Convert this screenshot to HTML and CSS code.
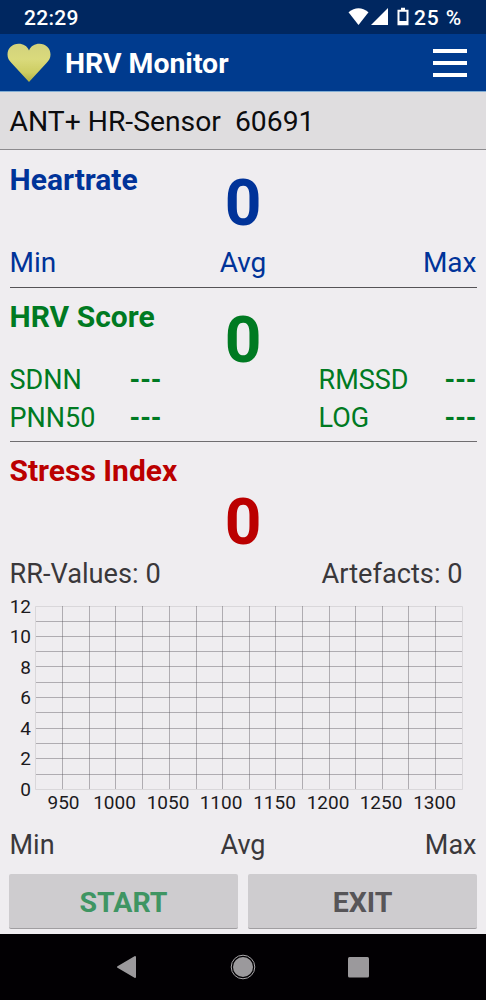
FILE: index.html
```html
<!DOCTYPE html>
<html lang="en">
  <head>
    <meta charset="UTF-8" />
    <meta name="viewport" content="width=device-width, initial-scale=1.0" />
    <title>HRV Monitor</title>
    <link rel="stylesheet" href="styles.css">
  </head>
  <body>
    <div class="status-bar">
      <span class="clock">22:29</span>
      <svg class="status-icons" width="62" height="22" viewBox="0 0 62 22">
        <path d="M0.5 6.2 Q10.5 -1.8 20.5 6.2 L10.5 19 Z" fill="#fff" />
        <path d="M40 2 V19 H23 Z" fill="#fff" />
        <path d="M53 1.8 h4 v2 h3.5 v15.4 h-11 v-15.4 h3.5 Z M51.5 5.8 v9.2 h7 v-9.2 Z" fill="#fff" fill-rule="evenodd" />
      </svg>
      <span class="battery">25 %</span>
    </div>

    <header>
      <svg class="heart" width="44" height="40" viewBox="0 0 44 40">
        <defs>
          <linearGradient id="gold" x1="0" y1="0" x2="0" y2="1">
            <stop offset="0" stop-color="#d2d27c" />
            <stop offset="0.4" stop-color="#dada7c" />
            <stop offset="0.75" stop-color="#cdcd62" />
            <stop offset="1" stop-color="#b0b045" />
          </linearGradient>
        </defs>
        <path d="M22 39 L4.500 20 C2 17.500 0.500 15 0.500 11.500 C0.500 5 5.500 0.800 11.500 0.800 C16.500 0.800 20 3 22 7.500 C24 3 27.500 0.800 32.500 0.800 C38.500 0.800 43.500 5 43.500 11.500 C43.500 15 42 17.500 39.500 20 Z" fill="url(#gold)" />
      </svg>
      <h1>HRV Monitor</h1>
      <div class="menu">
        <span></span>
        <span></span>
        <span></span>
      </div>
    </header>

    <div class="sensor">ANT+ HR-Sensor&nbsp; 60691</div>

    <main>
      <section class="panel heartrate">
        <div class="top">
          <h2>Heartrate</h2>
          <div class="value">0</div>
        </div>
        <div class="row">
          <span>Min</span>
          <span>Avg</span>
          <span>Max</span>
        </div>
      </section>

      <section class="panel score">
        <div class="top">
          <h2>HRV Score</h2>
          <div class="value">0</div>
        </div>
        <div class="stats">
          <span>SDNN</span>
          <b>---</b>
          <span>RMSSD</span>
          <b>---</b>
          <span>PNN50</span>
          <b>---</b>
          <span>LOG</span>
          <b>---</b>
        </div>
      </section>

      <section class="panel stress">
        <div class="top">
          <h2>Stress Index</h2>
          <div class="value">0</div>
        </div>
        <div class="counts">
          <span>RR-Values: 0</span>
          <span>Artefacts: 0</span>
        </div>
        <svg class="chart" width="486" height="230" viewBox="0 0 486 230">
          <path class="edge" d="M35.500 16.500 H462.500 V199.500 H35.500 Z" />
          <path class="grid" d="M36 31.500 H462 M36 46.500 H462 M36 61.500 H462 M36 76.500 H462 M36 92.500 H462 M36 107.500 H462 M36 122.500 H462 M36 138.500 H462 M36 153.500 H462 M36 168.500 H462 M36 184.500 H462" />
          <path class="grid" d="M62.500 16 V199 M89.500 16 V199 M115.500 16 V199 M142.500 16 V199 M169.500 16 V199 M196.500 16 V199 M222.500 16 V199 M249.500 16 V199 M275.500 16 V199 M302.500 16 V199 M329.500 16 V199 M355.500 16 V199 M382.500 16 V199 M408.500 16 V199 M435.500 16 V199" />
          <g class="y-labels">
            <text x="31" y="22.500">12</text>
            <text x="31" y="53">10</text>
            <text x="31" y="83.500">8</text>
            <text x="31" y="114">6</text>
            <text x="31" y="144.500">4</text>
            <text x="31" y="175">2</text>
            <text x="31" y="205.500">0</text>
          </g>
          <g class="x-labels">
            <text x="63.500" y="219">950</text>
            <text x="114.500" y="219">1000</text>
            <text x="168" y="219">1050</text>
            <text x="221" y="219">1100</text>
            <text x="274.500" y="219">1150</text>
            <text x="328" y="219">1200</text>
            <text x="381" y="219">1250</text>
            <text x="434.500" y="219">1300</text>
          </g>
        </svg>
        <div class="row range">
          <span>Min</span>
          <span>Avg</span>
          <span>Max</span>
        </div>
      </section>

      <div class="buttons">
        <button class="start">START</button>
        <button class="exit">EXIT</button>
      </div>
    </main>

    <nav>
      <svg width="486" height="66" viewBox="0 0 486 66">
        <path d="M118 33 L135 23 V43 Z" fill="#9b999c" stroke="#9b999c" stroke-width="2" stroke-linejoin="round" />
        <circle cx="243" cy="33" r="10" fill="#9b999c" />
        <circle cx="243" cy="33" r="11.800" fill="none" stroke="#aaa8ab" stroke-width="1" />
        <rect x="348" y="23" width="21" height="20.500" rx="1.500" fill="#9b999c" />
      </svg>
    </nav>
  </body>
</html>
```
FILE: styles.css
```css
* {
  box-sizing: border-box;
}

body {
  font-family: Roboto, sans-serif;
  background-color: #efedf0;
  margin: 0;
  width: 486px;
  height: 1000px;
  display: flex;
  flex-direction: column;
  overflow: hidden;
}

h1,
h2 {
  margin: 0;
  font-weight: bold;
}

.status-bar {
  height: 34px;
  padding: 1px 24px 0;
  display: flex;
  align-items: center;
  background-color: #002760;
  color: #fff;
  font-size: 21px;
  font-weight: 500;
  letter-spacing: 0.3px;
}

.clock {
  flex: 1;
}

.status-icons {
  margin-top: -2px;
}

.battery {
  width: 48px;
  margin-left: 4px;
  letter-spacing: 0.9px;
  white-space: nowrap;
}

header {
  height: 57px;
  padding: 1px 19px 0 7px;
  display: flex;
  align-items: center;
  background-color: #003b8e;
  color: #fff;
}

.heart {
  margin-right: 14px;
}

h1 {
  flex: 1;
  font-size: 28.4px;
  line-height: 34px;
  padding-top: 1px;
}

.menu {
  width: 34px;
  height: 28px;
  display: flex;
  flex-direction: column;
  justify-content: space-between;
}

.menu span {
  height: 4px;
  background-color: #fff;
}

.sensor {
  height: 59px;
  padding-left: 9.5px;
  background-color: #dfdddf;
  border-top: 1px solid #83aed4;
  border-bottom: 1px solid #8d8b8e;
  font-size: 28.3px;
  line-height: 60px;
  color: #0c0c0e;
}

main {
  height: 784px;
}

.panel {
  margin: 0 9.5px;
  font-size: 27px;
}

.heartrate {
  height: 138px;
  padding-top: 15px;
  border-bottom: 1px solid #555356;
  color: #003399;
}

.heartrate .row {
  font-size: 28px;
}

.score {
  height: 154px;
  padding-top: 14px;
  border-bottom: 1px solid #6f6d70;
  color: #007a22;
}

.stress {
  height: 431px;
  padding-top: 14px;
  color: #3a383b;
}

.stress .top {
  color: #bb0000;
}

.top {
  display: grid;
  grid-template-columns: 1fr auto 1fr;
}

h2 {
  font-size: 30px;
  line-height: 30px;
  white-space: nowrap;
}

.value {
  margin-top: 17px;
  font-size: 64px;
  font-weight: bold;
  line-height: 43px;
}

.stress .value {
  margin-top: 45px;
}

.row {
  display: grid;
  grid-template-columns: 1fr auto 1fr;
  margin-top: 22px;
  line-height: 32px;
}

.row span:last-child {
  text-align: right;
}

.stats {
  display: grid;
  grid-template-columns: 120px 189px 110px 1fr;
  margin-top: -1px;
  line-height: 38px;
}

.stats b:nth-child(4n) {
  text-align: right;
}

.counts {
  display: flex;
  justify-content: space-between;
  margin-top: 14px;
  padding-right: 14px;
  font-size: 27.2px;
  line-height: 32px;
}

.chart {
  display: block;
  margin: 0 -9.5px;
}

.edge {
  fill: none;
  stroke: #d9d7da;
}

.grid {
  fill: none;
  stroke: #55535a;
  stroke-opacity: 0.42;
}

.chart text {
  font-size: 19px;
  fill: #1c1a1d;
}

.y-labels {
  text-anchor: end;
}

.x-labels {
  text-anchor: middle;
}

.range {
  margin-top: 9px;
}

.buttons {
  display: flex;
  gap: 10px;
  padding: 0 9px;
}

button {
  flex: 1;
  height: 55px;
  margin-top: 1px;
  padding: 2px 0 0;
  border: none;
  border-bottom: 1px solid #a09ea1;
  border-radius: 2px;
  background-color: #cecccf;
  font-family: inherit;
  font-size: 28.5px;
  font-weight: bold;
}

.start {
  color: #3f9563;
}

.exit {
  color: #575558;
}

nav {
  height: 66px;
  background-color: #020003;
}
```
